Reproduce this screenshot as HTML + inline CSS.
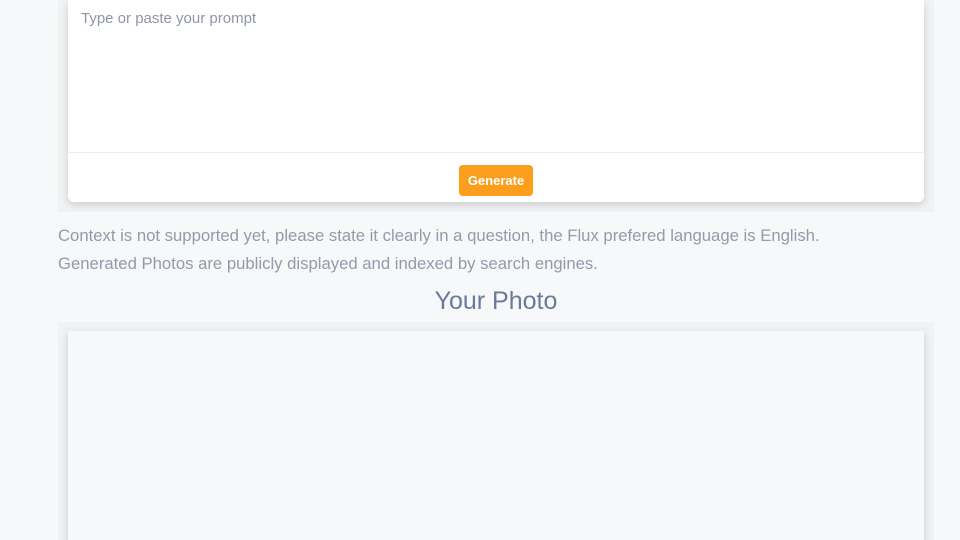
<!DOCTYPE html>
<html><head><style>
html,body{margin:0;width:960px;height:540px;overflow:hidden;}
body{background:#f7f8fa;font-family:"Liberation Sans",sans-serif;position:relative;}
.outer{position:absolute;left:58px;width:876px;background:#f1f2f3;}
.card{position:absolute;left:10px;width:856px;box-shadow:0 3px 8px rgba(0,0,0,0.15);}
</style></head><body>
<div class="outer" style="top:0;height:212px">
 <div class="card" style="top:0;height:202px;background:#fff;border-radius:0 0 6px 6px">
  <div style="position:absolute;left:13px;top:10px;font-size:15px;color:#8f96a3">Type or paste your prompt</div>
  <div style="position:absolute;left:0;right:0;top:152px;border-top:1px solid #ececec"></div>
  <div style="position:absolute;left:391px;top:165px;width:74px;height:31px;background:#fb9e1c;border-radius:4px;color:#fff;font-weight:bold;font-size:13px;line-height:31px;text-align:center">Generate</div>
 </div>
</div>
<div style="position:absolute;left:58px;top:222px;font-size:16.7px;color:#959aa8;line-height:28px;white-space:nowrap">Context is not supported yet, please state it clearly in a question, the Flux prefered language is English.<br>Generated Photos are publicly displayed and indexed by search engines.</div>
<div style="position:absolute;left:0;width:992px;top:287px;text-align:center;font-size:25px;color:#6c7a99">Your Photo</div>
<div class="outer" style="top:322px;height:218px">
 <div class="card" style="top:9px;height:220px;background:#f7f8fa"></div>
</div>
</body></html>
